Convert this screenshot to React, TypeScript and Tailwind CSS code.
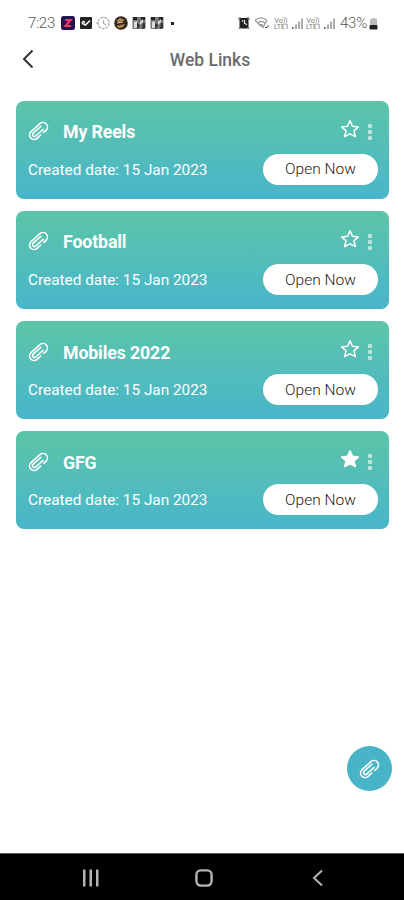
import React from 'react';

interface WebLink {
  title: string;
  date: string;
  starred: boolean;
}

const LINKS: WebLink[] = [
  { title: 'My Reels', date: '15 Jan 2023', starred: false },
  { title: 'Football', date: '15 Jan 2023', starred: false },
  { title: 'Mobiles 2022', date: '15 Jan 2023', starred: false },
  { title: 'GFG', date: '15 Jan 2023', starred: true },
];

function ClipIcon({ className }: { className?: string }) {
  return (
    <svg viewBox="0 0 22 20" fill="none" stroke="currentColor" strokeWidth="1.6" strokeLinecap="round" className={className}>
      <g transform="translate(10.5 10) rotate(-42)">
        <path d="M4.500 1.900H-5.400a1.900 1.900 0 0 1 0-3.800H5" />
        <path d="M-1 4.500H-6a4.500 4.500 0 0 1 0-9H6a4.500 4.500 0 0 1 0 9H3" />
      </g>
    </svg>
  );
}

function StarIcon({ filled }: { filled: boolean }) {
  return (
    <svg viewBox="0 0 20 20" className="h-5 w-5" fill={filled ? 'white' : 'none'} stroke="white" strokeWidth="1.5" strokeLinejoin="round">
      <path d="M10 1.700l2.400 5.600 6 .6-4.500 4 1.500 5.700-5.400-2.800-5.400 2.800 1.500-5.700-4.500-4 6-.6z" />
    </svg>
  );
}

function MoreIcon() {
  return (
    <svg viewBox="0 0 6 18" className="h-[18px] w-1.5" fill="white" fillOpacity="0.3" stroke="white" strokeOpacity="0.8" strokeWidth="1.2">
      <circle cx="3" cy="3" r="1.500" />
      <circle cx="3" cy="9" r="1.500" />
      <circle cx="3" cy="15" r="1.500" />
    </svg>
  );
}

function SignalIcon() {
  return (
    <svg viewBox="0 0 30 14" className="h-3.5 w-[30px]" fill="#aaa">
      <g fontFamily="Roboto, sans-serif" fontSize="6.8" fill="#777">
        <text x="0.5" y="6.5" textLength="13" lengthAdjust="spacingAndGlyphs">Vo))</text>
        <text x="0" y="13" textLength="15" lengthAdjust="spacingAndGlyphs">LTE1</text>
      </g>
      <rect x="18" y="11" width="1.500" height="2" fill="#555" />
      <rect x="21" y="8.500" width="2" height="4.500" />
      <rect x="24" y="5.500" width="2" height="7.500" />
      <rect x="27" y="2.500" width="2" height="10.500" />
    </svg>
  );
}

function PhotoIcon() {
  return (
    <svg viewBox="0 0 14 14" className="h-3.5 w-3.5">
      <rect x="0.5" y="1" width="13" height="12" rx="1" fill="#777" />
      <path d="M1 1h4v3H1zM9 1h4v3H9z" fill="#222" />
      <path d="M2 6l3-1v7H2zM8 6l3-3v3l-3 3z" fill="#ddd" />
      <path d="M5 7l3 2-2 4H5zM11 7h2v5l-3 1z" fill="#333" />
    </svg>
  );
}

function StatusBar() {
  return (
    <div className="flex h-[46px] items-center justify-between pl-7 pr-[26px]">
      <div className="flex items-center">
        <span className="w-[33px] text-[15px] font-light tracking-[-0.3px] text-[#555]">7:23</span>
        <svg viewBox="0 0 14 14" className="h-3.5 w-3.5">
          <rect width="14" height="14" rx="2.5" fill="#26134f" />
          <path d="M4 4h5.500L4.500 10H10" fill="none" stroke="#f33b67" strokeWidth="2" />
        </svg>
        <svg viewBox="0 0 12 12" className="ml-[5px] h-3 w-3">
          <rect width="12" height="12" rx="1" fill="#222" />
          <path d="M2.500 4.500v2l3 1.500L10 3.500M3 4l2 1.500" fill="none" stroke="white" strokeWidth="1.500" />
        </svg>
        <svg viewBox="0 0 14 14" className="ml-1 h-3.5 w-3.5" fill="none" stroke="#aaa" strokeWidth="1.2">
          <circle cx="7.500" cy="7" r="5.600" strokeDasharray="3 0.8" />
          <path d="M0 7h3M7.500 4v3.500L10 9" />
        </svg>
        <svg viewBox="0 0 14 14" className="ml-1 h-3.5 w-3.5">
          <circle cx="7" cy="7" r="6.800" fill="#2e271c" />
          <path d="M2 5l4-3 5 2-2 1-4 1zM2 10l9-2-2 3-4 1z" fill="#b98a43" />
          <path d="M3 7l6-1" stroke="#ddd" strokeWidth="1" />
        </svg>
        <span className="ml-1 flex gap-1">
          <PhotoIcon />
          <PhotoIcon />
        </span>
        <span className="ml-[7px] h-[3px] w-[3px] bg-[#222]" />
      </div>
      <div className="flex items-center">
        <svg viewBox="0 0 12 12" className="h-3 w-3">
          <rect x="1.500" y="1" width="9" height="10.500" rx="1.500" fill="#222" />
          <path d="M0 2.500L2.500 0M12 2.500L9.500 0M1 12l1-2M11 12l-1-2" stroke="#777" strokeWidth="1.200" />
          <path d="M6.500 3v3.500L9 7.500M4 4.500l1-1" fill="none" stroke="white" strokeWidth="1.100" />
        </svg>
        <svg viewBox="0 0 16 14" className="ml-1 h-3.5 w-4" fill="none" stroke="#999" strokeWidth="1.200">
          <path d="M1 4.500c4-3.500 8-3.500 12 0M3 7c3-2.400 5.500-2.400 8 0M5 9.500c1.500-1.200 3-1.200 4.200 0M1 4.500l8 7 4-7" />
          <path d="M11 11.500h2M14 9.500v2" stroke="#444" />
        </svg>
        <span className="ml-1 flex gap-0.5">
          <SignalIcon />
          <SignalIcon />
        </span>
        <span className="ml-1 w-7 whitespace-nowrap text-[15px] font-light tracking-[-0.2px] text-[#555]">43%</span>
        <svg viewBox="0 0 9 13" className="ml-px h-[13px] w-[9px]">
          <path d="M3 1h3v1h2v6H1V2h2z" fill="#bbb" />
          <rect x="0.500" y="8" width="8" height="4.500" rx="1" fill="#222" />
        </svg>
      </div>
    </div>
  );
}

function LinkCard({ link }: { link: WebLink }) {
  return (
    <div className="h-[98px] rounded-[8px] bg-linear-to-b from-[#5cc5a7] to-[#49b5ca] pl-3 pr-[11px] pt-[17px] text-white">
      <div className="flex h-7 items-center">
        <ClipIcon className="-mt-px h-5 w-[22px]" />
        <h2 className="flex-1 pl-[13px] pt-px text-[17.700px] font-bold leading-6 tracking-[-0.1px]">{link.title}</h2>
        <div className="mr-[5px] flex items-center gap-[7px]">
          <span className="-mt-1.5">
            <StarIcon filled={link.starred} />
          </span>
          <MoreIcon />
        </div>
      </div>
      <div className="mt-2 flex h-[31px] items-center justify-between">
        <p className="pt-px text-[15.350px] leading-5">Created date: {link.date}</p>
        <button className="h-[31px] w-[115px] rounded-full bg-white pt-0.5 text-[15.500px] font-light text-[#222]">Open Now</button>
      </div>
    </div>
  );
}

export default function App() {
  return (
    <div className="flex h-[900px] w-[404px] flex-col bg-white font-[Roboto,sans-serif]">
      <StatusBar />
      <header className="grid h-7 grid-cols-[1fr_auto_1fr] items-center">
        <svg viewBox="0 0 12 20" className="-mt-0.5 ml-[22px] h-5 w-3" fill="none" stroke="#333" strokeWidth="2">
          <path d="M10.500 1.500L2 10l8.500 8.500" />
        </svg>
        <h1 className="translate-x-2 text-[17.500px] font-medium text-[#6b6b6b]">Web Links</h1>
      </header>
      <main className="flex flex-1 flex-col gap-[12.3px] pl-4 pr-[15px] pt-[26.500px]">
        {LINKS.map((link) => (
          <LinkCard key={link.title} link={link} />
        ))}
      </main>
      <div className="flex h-[107px] justify-end pr-3">
        <button className="flex h-[45px] w-[45px] items-center justify-center rounded-full bg-[#49b4c8] text-white">
          <ClipIcon className="h-5 w-[22px]" />
        </button>
      </div>
      <nav className="grid h-[47px] grid-cols-[90px_auto_90px] items-center border-t border-[#555] bg-black pt-0.5 text-[#b5b5b5]">
        <svg viewBox="0 0 18 18" className="h-[18px] w-[18px] translate-x-[82px]" fill="currentColor">
          <rect x="1" y="0.500" width="2.500" height="17" />
          <rect x="7.500" y="0.500" width="2.500" height="17" />
          <rect x="14" y="0.500" width="2.500" height="17" />
        </svg>
        <svg viewBox="0 0 18 18" className="h-[18px] w-[18px] translate-x-0.5 justify-self-center" fill="none" stroke="currentColor" strokeWidth="2.400">
          <rect x="1.400" y="1.400" width="15.200" height="15.200" rx="4.500" />
        </svg>
        <svg viewBox="0 0 12 18" className="h-[18px] w-3 -translate-x-0.5" fill="none" stroke="currentColor" strokeWidth="2">
          <path d="M10 1.500L2 9l8 7.500" />
        </svg>
      </nav>
    </div>
  );
}
